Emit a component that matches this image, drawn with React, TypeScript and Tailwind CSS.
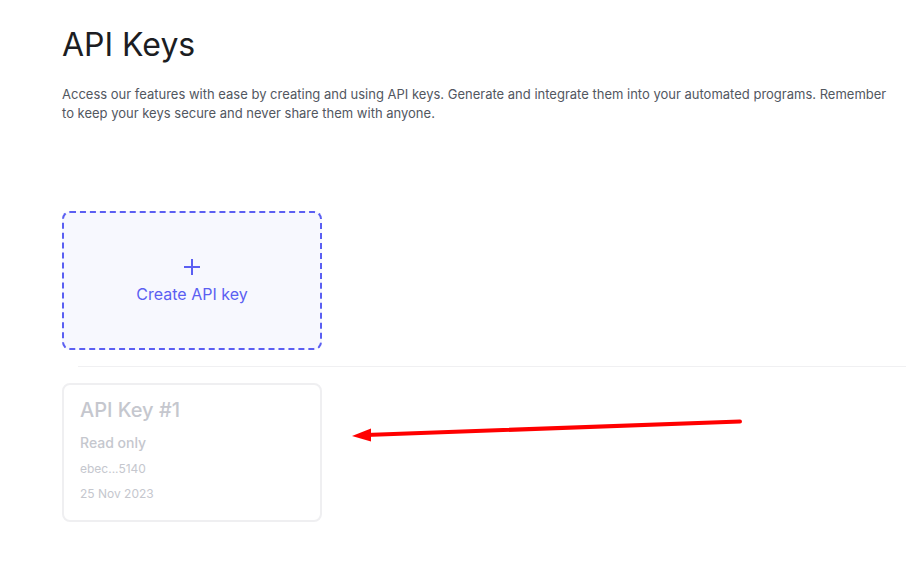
import React from "react";

const ApiKeyCard: React.FC<{ name: string; access: string; masked: string; created: string }> = ({
  name,
  access,
  masked,
  created,
}) => (
  <div className="w-[260px] h-[139px] rounded-lg border-2 border-[#efeff1] bg-white px-4 pt-[11px] text-[#c5c7ce]">
    <div className="text-[20px] leading-7 font-medium">{name}</div>
    <div className="mt-[9px] text-[14px] leading-5 font-medium">{access}</div>
    <div className="mt-[7px] text-[12px] leading-[18px]">{masked}</div>
    <div className="mt-[7px] text-[12px] leading-[18px]">{created}</div>
  </div>
);

export default function App() {
  return (
    <div className="relative min-h-[575px] bg-white font-['Inter','Noto_Sans',sans-serif]">
      <div className="pl-[62px] pt-[25px]">
        <h1 className="text-[32px] leading-10 text-[#1c1d22]">API Keys</h1>
        <p className="mt-[20px] max-w-[830px] text-[13px] leading-[19px] text-[#52575f]">
          Access our features with ease by creating and using API keys. Generate and integrate them into your
          automated programs. Remember to keep your keys secure and never share them with anyone.
        </p>

        <button className="mt-[88px] flex h-[139px] w-[260px] flex-col items-center justify-center gap-2 rounded-lg border-2 border-dashed border-[#5b5ff2] bg-[#f7f8fe] text-[#5b5ff2]">
          <svg width="18" height="18" viewBox="0 0 18 18" fill="none" stroke="currentColor" strokeWidth="2">
            <path d="M9 1v16M1 9h16" />
          </svg>
          <span className="text-[16px] leading-5">Create API key</span>
        </button>
      </div>

      <div className="ml-[78px] mt-4 h-px bg-[#f0f0f2]" />

      <div className="pl-[62px] pt-4">
        <ApiKeyCard name="API Key #1" access="Read only" masked="ebec...5140" created="25 Nov 2023" />
      </div>

      {/* annotation arrow */}
      <svg className="pointer-events-none absolute left-0 top-0" width="906" height="575">
        <line x1="740" y1="421.5" x2="366" y2="435" stroke="#ff0000" strokeWidth="4" strokeLinecap="round" />
        <polygon points="352,436 371,428.5 371,441.5" fill="#ff0000" />
      </svg>
    </div>
  );
}
